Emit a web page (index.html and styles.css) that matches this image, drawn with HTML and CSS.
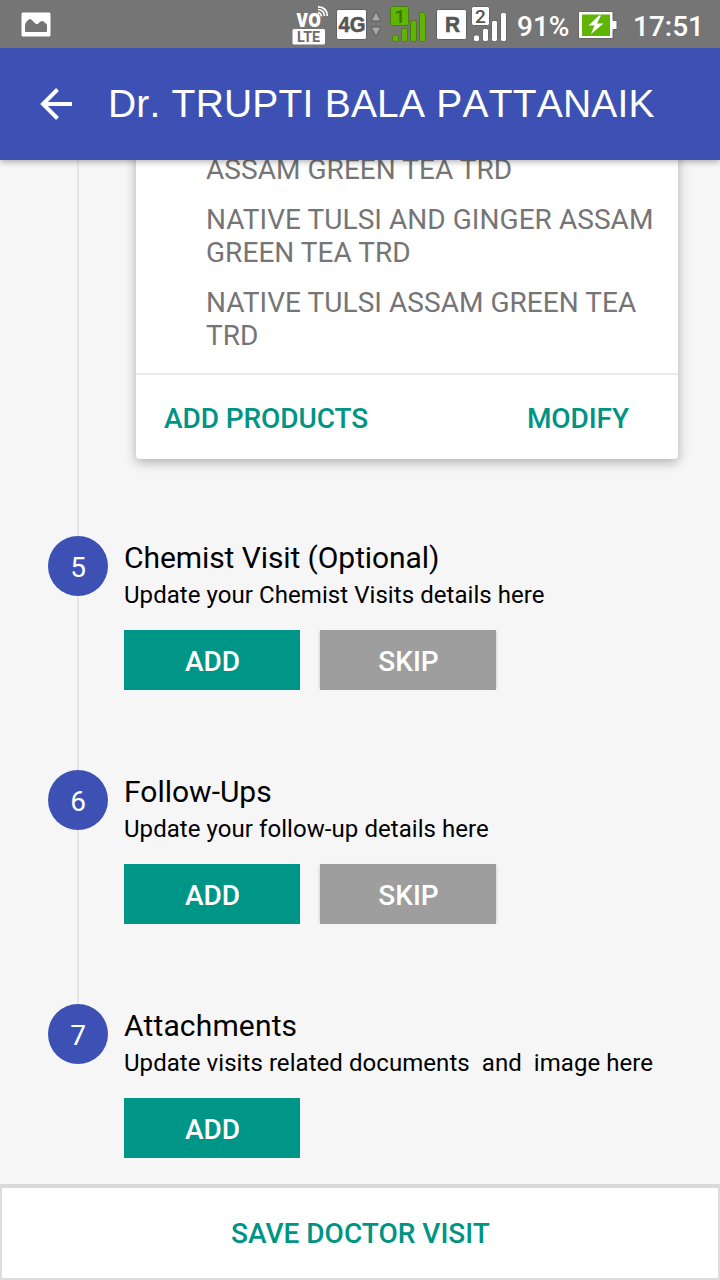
FILE: index.html
```html
<!DOCTYPE html>
<html lang="en">
<head>
<meta charset="utf-8">
<title>Doctor Visit</title>
<link rel="stylesheet" href="styles.css">
</head>
<body>
<div class="screen">
  <header class="status">
    <svg class="status-icons" width="720" height="48" viewBox="0 0 720 48" role="img" aria-label="Status bar">
      <path fill="#fff" fill-rule="evenodd" d="M23 12.5h26a1.5 1.5 0 0 1 1.5 1.5v21a1.5 1.5 0 0 1-1.5 1.5H23a1.5 1.5 0 0 1-1.5-1.5V14a1.5 1.5 0 0 1 1.5-1.5zM25 24.500V31q0 1 1 1h20q1 0 1-1v-6.500l-3.500-3q-1.500-1.200-3 0l-2.500 2.300q-1.200.9-2.400 0l-4-4q-1.600-1.600-3.200 0l-2 2z"/>
      <text class="vo" x="296.500" y="27" textLength="24.500" lengthAdjust="spacingAndGlyphs">VO</text>
      <g fill="none" stroke="#fff" stroke-width="1.700">
        <path d="M318 12.500q3 .5 3.500 3.800M318 9.500q6 .5 6.500 6.500M318 6.800q9 .2 9.300 9.200"/>
      </g>
      <rect x="292.500" y="29" width="32.500" height="15.500" rx="1.500" fill="#fff"/>
      <text class="lte" x="297" y="42" textLength="23" lengthAdjust="spacingAndGlyphs">LTE</text>
      <rect x="336.500" y="9.500" width="30" height="30" rx="2" fill="#fff" stroke="#616161"/>
      <text class="net" x="338.500" y="32" textLength="27" lengthAdjust="spacingAndGlyphs">4G</text>
      <path d="M376 11.500l5 9.500h-10zM376 36.500l5-9.500h-10z" fill="#a6a6a6" stroke="#5f5f5f"/>
      <g fill="#5fb404" stroke="#4a7d1a">
        <rect x="390.500" y="6.500" width="18" height="19" rx="2"/>
        <rect x="392.500" y="35" width="6" height="6.500" rx="2"/>
        <rect x="401.500" y="28.500" width="6" height="13" rx="2"/>
        <rect x="410.500" y="20.500" width="6" height="21" rx="2"/>
        <rect x="419.500" y="12.500" width="6" height="29" rx="2"/>
      </g>
      <text class="sim sim-one" x="394.500" y="23">1</text>
      <rect x="436.500" y="9.500" width="30" height="30" rx="2" fill="#fff" stroke="#616161"/>
      <text class="roam" x="445" y="32" textLength="15" lengthAdjust="spacingAndGlyphs">R</text>
      <g fill="#fff" stroke="#666">
        <rect x="471.500" y="6.500" width="18" height="19" rx="2"/>
        <rect x="473.500" y="35" width="6" height="6.500" rx="2"/>
        <rect x="482.500" y="28.500" width="6" height="13" rx="2"/>
        <rect x="491.500" y="20.500" width="6" height="21" rx="2"/>
        <rect x="500.500" y="12.500" width="6" height="29" rx="2"/>
      </g>
      <text class="sim" x="475" y="23">2</text>
      <text class="level" x="517" y="36" textLength="52.500" lengthAdjust="spacingAndGlyphs">91%</text>
      <path d="M578.500 11.500h34.500v9h4v9h-4v9h-34.500z" fill="#fff" stroke="#666"/>
      <rect x="582" y="14.500" width="28" height="21.500" fill="#5fb404"/>
      <path d="M599 15.500l-10.500 10h6l-3.500 8.500l12.500-10.500h-6.500l4-8z" fill="#fff"/>
      <text class="clock" x="633" y="36" textLength="71" lengthAdjust="spacingAndGlyphs">17:51</text>
    </svg>
  </header>

  <div class="appbar">
    <svg class="back" width="34" height="34" viewBox="0 0 34 34" aria-label="Back">
      <path d="M33 17H4M18.500 2.500L4 17l14.500 14.500" fill="none" stroke="#fff" stroke-width="4"/>
    </svg>
    <h1 class="appbar-title">Dr. TRUPTI BALA PATTANAIK</h1>
  </div>

  <main class="steps">
    <section class="step step-products">
      <div class="rail"><span class="line"></span></div>
      <div class="card">
        <div class="products">
          <p class="product">ASSAM GREEN TEA TRD</p>
          <p class="product">NATIVE TULSI AND GINGER ASSAM<br>GREEN TEA TRD</p>
          <p class="product">NATIVE TULSI ASSAM GREEN TEA<br>TRD</p>
        </div>
        <div class="card-actions">
          <button class="link">ADD PRODUCTS</button>
          <button class="link">MODIFY</button>
        </div>
      </div>
    </section>

    <section class="step">
      <div class="rail"><span class="badge">5</span><span class="line"></span></div>
      <div class="content">
        <h2 class="title title-long">Chemist Visit (Optional)</h2>
        <p class="hint">Update your Chemist Visits details here</p>
        <div class="buttons"><button class="btn add">ADD</button><button class="btn skip">SKIP</button></div>
      </div>
    </section>

    <section class="step">
      <div class="rail"><span class="badge">6</span><span class="line"></span></div>
      <div class="content">
        <h2 class="title">Follow-Ups</h2>
        <p class="hint">Update your follow-up details here</p>
        <div class="buttons"><button class="btn add">ADD</button><button class="btn skip">SKIP</button></div>
      </div>
    </section>

    <section class="step step-last">
      <div class="rail"><span class="badge">7</span></div>
      <div class="content">
        <h2 class="title title-wide">Attachments</h2>
        <p class="hint">Update visits related documents&nbsp; and&nbsp; image here</p>
        <div class="buttons"><button class="btn add">ADD</button></div>
      </div>
    </section>
  </main>

  <button class="save">SAVE DOCTOR VISIT</button>
</div>
</body>
</html>
```
FILE: styles.css
```css
* {
  box-sizing: border-box;
  margin: 0;
  padding: 0;
}

body {
  font-family: Roboto, sans-serif;
  background: #f6f6f6;
}

button {
  font: 500 28px/33px Roboto, sans-serif;
  border: 0;
  background: none;
}

.screen {
  display: flex;
  flex-direction: column;
  width: 720px;
  height: 1280px;
  overflow: hidden;
}

.status {
  flex: none;
  height: 48px;
  background: #757575;
}

.status-icons {
  display: block;
}

.status-icons text {
  font-family: Roboto, sans-serif;
  fill: #fff;
}

.status-icons .vo {
  font: 800 19.5px "Open Sans", "Noto Sans", sans-serif;
}

.status-icons .lte {
  font-size: 14px;
  font-weight: 700;
  fill: #6c6c6c;
}

.status-icons .net,
.status-icons .roam {
  font: 700 22px "Liberation Sans", sans-serif;
  fill: #555;
  stroke: #555;
  stroke-width: 0.6px;
}

.status-icons .sim {
  font-size: 19px;
  font-weight: 500;
  fill: #555;
}

.status-icons .sim-one {
  fill: #3c7300;
}

.status-icons .level,
.status-icons .clock {
  font-size: 28px;
  font-weight: 500;
}

.appbar {
  flex: none;
  display: flex;
  align-items: center;
  gap: 35px;
  height: 112px;
  padding-left: 39px;
  background: #3d51b4;
  box-shadow: 0 2px 6px rgba(0, 0, 0, 0.3);
  clip-path: inset(0 0 -10px 0);
  z-index: 1;
}

.appbar-title {
  font: 400 39px/48px "Liberation Sans", Arial, sans-serif;
  font-kerning: none;
  letter-spacing: 0.2px;
  color: #fff;
  white-space: nowrap;
}

.steps {
  flex: 1;
  min-height: 0;
  overflow: hidden;
}

.step {
  display: flex;
  gap: 16px;
  height: 234px;
  padding-left: 48px;
}

.step-products {
  gap: 28px;
  height: 376px;
}

.step-last {
  height: 180px;
}

.rail {
  display: flex;
  flex-direction: column;
  align-items: center;
  width: 60px;
}

.line {
  flex: 1;
  width: 2px;
  background: #e5e5e5;
}

.badge {
  width: 60px;
  height: 60px;
  border-radius: 50%;
  background: #3d51b4;
  color: #fff;
  font-size: 28px;
  line-height: 63px;
  text-align: center;
}

.card {
  width: 542px;
  height: 309px;
  margin-top: -10px;
  border-radius: 0 0 4px 4px;
  background: #fff;
  box-shadow: 0 3px 12px rgba(0, 0, 0, 0.3);
}

.products {
  display: flex;
  flex-direction: column;
  gap: 17px;
  height: 223px;
  padding: 3px 0 0 70px;
}

.product {
  font-size: 28px;
  line-height: 33px;
  letter-spacing: 0.05px;
  color: #757575;
  white-space: nowrap;
}

.card-actions {
  display: flex;
  align-items: center;
  justify-content: space-between;
  height: 86px;
  padding: 2px 49px 0 28px;
  border-top: 2px solid #ececec;
}

.link,
.save {
  color: #009485;
}

.link {
  letter-spacing: -0.08px;
}

.content {
  padding-top: 4px;
}

.title {
  font-size: 30px;
  font-weight: 400;
  line-height: 36px;
}

.title-long {
  letter-spacing: -0.08px;
}

.title-wide {
  letter-spacing: 0.15px;
}

.hint {
  margin-top: 5px;
  font-size: 24px;
  line-height: 28px;
  letter-spacing: 0.06px;
  white-space: nowrap;
}

.buttons {
  display: flex;
  gap: 20px;
  margin-top: 21px;
}

.btn {
  width: 176px;
  height: 60px;
  padding: 2px 0 0 1px;
  color: #fff;
}

.add {
  background: #009687;
}

.skip {
  background: #9e9e9e;
  box-shadow: 2px 0 2px -1px rgba(0, 0, 0, 0.12), -2px 0 2px -1px rgba(0, 0, 0, 0.12);
}

.save {
  flex: none;
  height: 96px;
  padding-left: 1px;
  border: 2px solid #dcdcdc;
  border-top: 4px solid #d9d9d9;
  background: #fff;
}
```
